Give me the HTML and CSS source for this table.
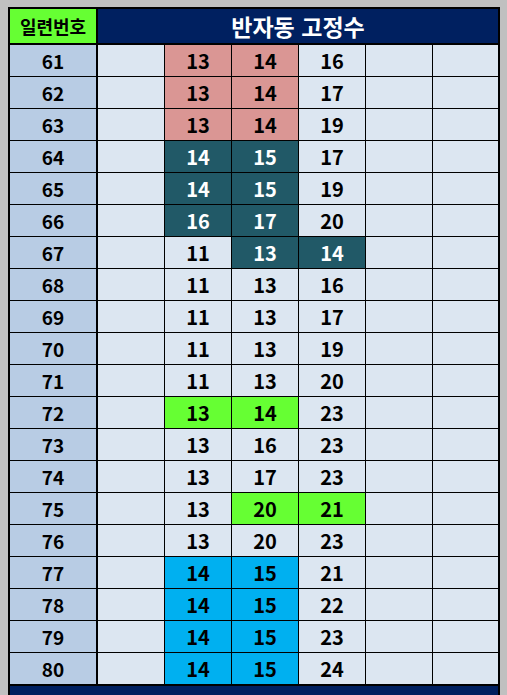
FILE: index.html
```html
<!DOCTYPE html>
<html lang="ko">
<head>
<meta charset="utf-8">
<link rel="stylesheet" href="styles.css">
</head>
<body>
<div class="sheet">
  <div class="c hd-id">일련번호</div>
  <div class="c hd-title">반자동 고정수</div>

  <div class="c id">61</div><div class="c"></div><div class="c pk">13</div><div class="c pk">14</div><div class="c">16</div><div class="c"></div><div class="c last"></div>
  <div class="c id">62</div><div class="c"></div><div class="c pk">13</div><div class="c pk">14</div><div class="c">17</div><div class="c"></div><div class="c last"></div>
  <div class="c id">63</div><div class="c"></div><div class="c pk">13</div><div class="c pk">14</div><div class="c">19</div><div class="c"></div><div class="c last"></div>
  <div class="c id">64</div><div class="c"></div><div class="c tl">14</div><div class="c tl">15</div><div class="c">17</div><div class="c"></div><div class="c last"></div>
  <div class="c id">65</div><div class="c"></div><div class="c tl">14</div><div class="c tl">15</div><div class="c">19</div><div class="c"></div><div class="c last"></div>
  <div class="c id">66</div><div class="c"></div><div class="c tl">16</div><div class="c tl">17</div><div class="c">20</div><div class="c"></div><div class="c last"></div>
  <div class="c id">67</div><div class="c"></div><div class="c">11</div><div class="c tl">13</div><div class="c tl">14</div><div class="c"></div><div class="c last"></div>
  <div class="c id">68</div><div class="c"></div><div class="c">11</div><div class="c">13</div><div class="c">16</div><div class="c"></div><div class="c last"></div>
  <div class="c id">69</div><div class="c"></div><div class="c">11</div><div class="c">13</div><div class="c">17</div><div class="c"></div><div class="c last"></div>
  <div class="c id">70</div><div class="c"></div><div class="c">11</div><div class="c">13</div><div class="c">19</div><div class="c"></div><div class="c last"></div>
  <div class="c id">71</div><div class="c"></div><div class="c">11</div><div class="c">13</div><div class="c">20</div><div class="c"></div><div class="c last"></div>
  <div class="c id">72</div><div class="c"></div><div class="c gr">13</div><div class="c gr">14</div><div class="c">23</div><div class="c"></div><div class="c last"></div>
  <div class="c id">73</div><div class="c"></div><div class="c">13</div><div class="c">16</div><div class="c">23</div><div class="c"></div><div class="c last"></div>
  <div class="c id">74</div><div class="c"></div><div class="c">13</div><div class="c">17</div><div class="c">23</div><div class="c"></div><div class="c last"></div>
  <div class="c id">75</div><div class="c"></div><div class="c">13</div><div class="c gr">20</div><div class="c gr">21</div><div class="c"></div><div class="c last"></div>
  <div class="c id">76</div><div class="c"></div><div class="c">13</div><div class="c">20</div><div class="c">23</div><div class="c"></div><div class="c last"></div>
  <div class="c id">77</div><div class="c"></div><div class="c cy">14</div><div class="c cy">15</div><div class="c">21</div><div class="c"></div><div class="c last"></div>
  <div class="c id">78</div><div class="c"></div><div class="c cy">14</div><div class="c cy">15</div><div class="c">22</div><div class="c"></div><div class="c last"></div>
  <div class="c id">79</div><div class="c"></div><div class="c cy">14</div><div class="c cy">15</div><div class="c">23</div><div class="c"></div><div class="c last"></div>
  <div class="c id end">80</div><div class="c end"></div><div class="c cy end">14</div><div class="c cy end">15</div><div class="c end">24</div><div class="c end"></div><div class="c last end"></div>

  <div class="foot"></div>
</div>
</body>
</html>
```

FILE: styles.css
```css
html, body {
  margin: 0;
  padding: 0;
}
body {
  background: #c0c0c0;
  height: 695px;
  overflow: hidden;
  font-family: "Noto Sans CJK KR", "Noto Sans", sans-serif;
}
.sheet {
  margin: 7px 0 0 8px;
  width: 492px;
  box-sizing: border-box;
  border: 2px solid #000;
  border-bottom: none;
  display: grid;
  grid-template-columns: 88px 67px 67px 67px 67px 67px 65px;
  grid-template-rows: 36px repeat(19, 32px) 33px 30px;
  background: #dce6f1;
}
.c {
  box-sizing: border-box;
  border-right: 1px solid #000;
  border-bottom: 1px solid #000;
  display: flex;
  align-items: center;
  justify-content: center;
  font-size: 20px;
  font-weight: 700;
  color: #000;
  line-height: 1;
  background: #dce6f1;
}
.c.last {
  border-right: none;
}
.c.end {
  border-bottom-width: 2px;
}
.hd-id {
  background: #66ff33;
  border-right-width: 2px;
  border-bottom-width: 2px;
  font-size: 18px;
}
.hd-title {
  grid-column: 2 / 8;
  background: #002060;
  color: #fff;
  border-right: none;
  border-bottom-width: 2px;
  font-size: 23px;
}
.id {
  background: #b8cce4;
  border-right-width: 2px;
  font-size: 19px;
}
.pk { background: #da9694; }
.tl { background: #215967; color: #fff; }
.gr { background: #66ff33; }
.cy { background: #00b0f0; }
.foot {
  grid-column: 1 / 8;
  background: #002060;
}
```
